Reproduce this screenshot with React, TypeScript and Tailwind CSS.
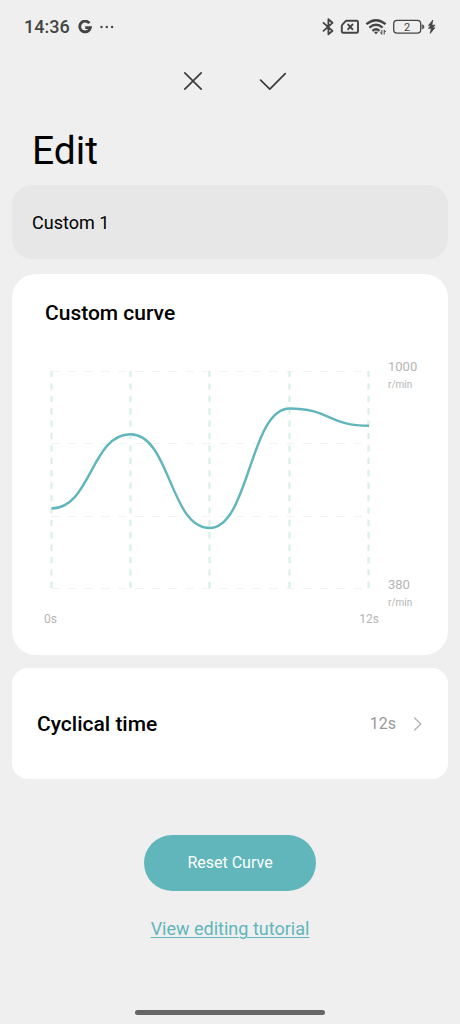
import { useState } from "react";

const COLUMNS = [8, 87, 166, 246, 325];
const ROWS = [14, 86, 159, 231];

function StatusBar() {
  return (
    <div className="flex h-[54px] items-center justify-between px-6 text-[#444]">
      <div className="flex items-center gap-2">
        <span className="text-[18px] leading-6 font-medium">14:36</span>
        <svg viewBox="0 0 14 14" className="h-[14px] w-[14px]" fill="none" stroke="currentColor" strokeWidth="2.8" aria-hidden="true">
          <path d="M11.4 3.2A5.4 5.4 0 1 0 12.4 7.7H7.2" />
        </svg>
        <svg viewBox="0 0 14 4" className="h-1 w-[14px]" fill="currentColor" aria-hidden="true">
          <circle cx="1.5" cy="2" r="1.2" />
          <circle cx="6.8" cy="2" r="1.2" />
          <circle cx="12.1" cy="2" r="1.2" />
        </svg>
      </div>
      <svg viewBox="0 0 116 20" className="h-5 w-[116px]" fill="none" stroke="currentColor" strokeLinecap="round" strokeLinejoin="round" aria-hidden="true">
        <path d="M3.5 5.8 12.5 13.8 8.4 17.3V2.2L12.5 5.8 3.5 13.8" strokeWidth="1.8" />
        <path d="M26.6 3.8H36.6Q38 3.8 38 5.2V14.4Q38 15.8 36.6 15.8H23.2Q21.8 15.8 21.8 14.4V9Q21.8 8.2 22.4 7.6L25.4 4.4Q26 3.8 26.6 3.8Z" strokeWidth="1.9" />
        <path d="M28.2 7.6 32.4 12.2M32.4 7.6 28.2 12.2" strokeWidth="2" />
        <g strokeWidth="2.3" strokeLinecap="butt">
          <path d="M46.4 7.2Q56 -.8 65.6 7.2" />
          <path d="M49.4 10.6Q56 5 62.6 10.6" />
          <path d="M52.4 13.8Q56 10.8 59.6 13.8" />
        </g>
        <path d="M54 15Q56 14 58 15L56 17.6Z" fill="currentColor" stroke="none" />
        <path d="M61.8 13.4V17M60.4 15.8 61.8 17M64.2 17V13.4M64.2 13.4 65.6 14.6" strokeWidth="1" />
        <rect x="73.7" y="3.4" width="27" height="12.8" rx="3.4" strokeWidth="1.3" />
        <path d="M102.4 7.8Q104 8 104 9.8T102.4 11.8Z" fill="currentColor" strokeWidth=".6" />
        <text x="87" y="13.8" textAnchor="middle" fill="currentColor" stroke="none" className="text-[11px]">2</text>
        <path d="M112.6 3.4 108.4 8.6H111L108.4 11.2H111.4L110.2 16.4 114.8 10.8H112.4L115 8.2H112Z" fill="currentColor" strokeWidth=".8" />
      </svg>
    </div>
  );
}

function CurveChart() {
  return (
    <div className="mt-[31px] flex gap-[9px] pr-8 pl-[31px] text-[#b5b5b5]">
      <div className="min-w-0 flex-1">
        <svg viewBox="0 0 336 252" className="block w-full" fill="none" role="img" aria-label="Custom curve">
          {ROWS.map((y) => (
            <path key={y} d={`M8 ${y - 0.5}H326`} stroke="#f1f3f2" strokeWidth="1" strokeDasharray="8.4 8.4" />
          ))}
          {COLUMNS.map((x) => (
            <path key={x} d={`M${x + 0.5} 13V231`} stroke="#d9f0ea" strokeWidth="2.2" strokeDasharray="6.2 6.2" />
          ))}
          <path
            d="M8.5 150.5C48 150.5 48 76.3 87.5 76.3S127 170 166.5 170 207 50.5 246.5 50.5 286 67.8 326 67.8"
            stroke="#61b6bb"
            strokeWidth="2.4"
          />
        </svg>
        <div className="flex justify-between pl-px text-[12px] leading-[18px]">
          <span>0s</span>
          <span>12s</span>
        </div>
      </div>
      <div className="mb-4 flex w-7 flex-col justify-between">
        <div>
          <p className="text-[13px] leading-[18px]">1000</p>
          <p className="text-[10px] leading-[18px]">r/min</p>
        </div>
        <div>
          <p className="text-[13px] leading-[18px]">380</p>
          <p className="text-[10px] leading-[18px]">r/min</p>
        </div>
      </div>
    </div>
  );
}

export default function App() {
  const [name, setName] = useState("Custom 1");

  return (
    <div className="flex min-h-screen flex-col bg-[#efefef] font-[Roboto,sans-serif] text-black">
      <StatusBar />
      <header className="flex h-[54px] items-center justify-center gap-[52px] pl-[6px] text-[#3c3c3c]">
        <button type="button" aria-label="Cancel" className="flex h-8 w-7 items-center justify-center">
          <svg viewBox="0 0 20 20" className="h-5 w-5" fill="none" stroke="currentColor" strokeWidth="1.7" strokeLinecap="round">
            <path d="M1.8 1.8 18.2 18.2M18.2 1.8 1.8 18.2" />
          </svg>
        </button>
        <button type="button" aria-label="Save" className="flex h-8 w-7 items-center justify-center">
          <svg viewBox="0 0 28 20" className="h-5 w-7" fill="none" stroke="currentColor" strokeWidth="1.7" strokeLinecap="round" strokeLinejoin="round">
            <path d="M1.6 9.2 10.8 18.2 26.2 2.6" />
          </svg>
        </button>
      </header>
      <main className="flex flex-col px-3">
        <h1 className="mt-4 pl-5 text-[39px] leading-[54px]">Edit</h1>
        <input
          type="text"
          aria-label="Curve name"
          value={name}
          onChange={(e) => setName(e.target.value)}
          className="mt-[7px] h-[74px] w-full rounded-[20px] bg-[#e7e7e7] px-5 text-[18px] outline-none"
        />
        <section className="mt-[15px] rounded-3xl bg-white pt-[25px] pb-[27px]">
          <h2 className="pl-[33px] text-[21px] leading-7 font-medium">Custom curve</h2>
          <CurveChart />
        </section>
        <button type="button" className="mt-[13px] flex h-[111px] w-full items-center rounded-2xl bg-white pr-6 pl-[25px]">
          <span className="text-[21px] leading-7 font-medium">Cyclical time</span>
          <span className="ml-auto text-[16px] leading-6 text-[#999]">12s</span>
          <svg viewBox="0 0 12 16" className="ml-4 h-4 w-3 text-[#b4b4b4]" fill="none" stroke="currentColor" strokeWidth="1.4" strokeLinecap="round" strokeLinejoin="round" aria-hidden="true">
            <path d="M2.6 2 8.8 8 2.6 14" />
          </svg>
        </button>
        <button type="button" className="mt-14 h-14 w-[172px] self-center rounded-full bg-[#61b6bb] text-[16px] text-white">
          Reset Curve
        </button>
        <a href="#tutorial" className="mt-6 self-center text-[18px] leading-7 text-[#61b6bb] underline decoration-1 underline-offset-2">
          View editing tutorial
        </a>
      </main>
      <div className="mt-auto mb-[9px] h-[5px] w-[190px] self-center rounded-full bg-[#666]" />
    </div>
  );
}
